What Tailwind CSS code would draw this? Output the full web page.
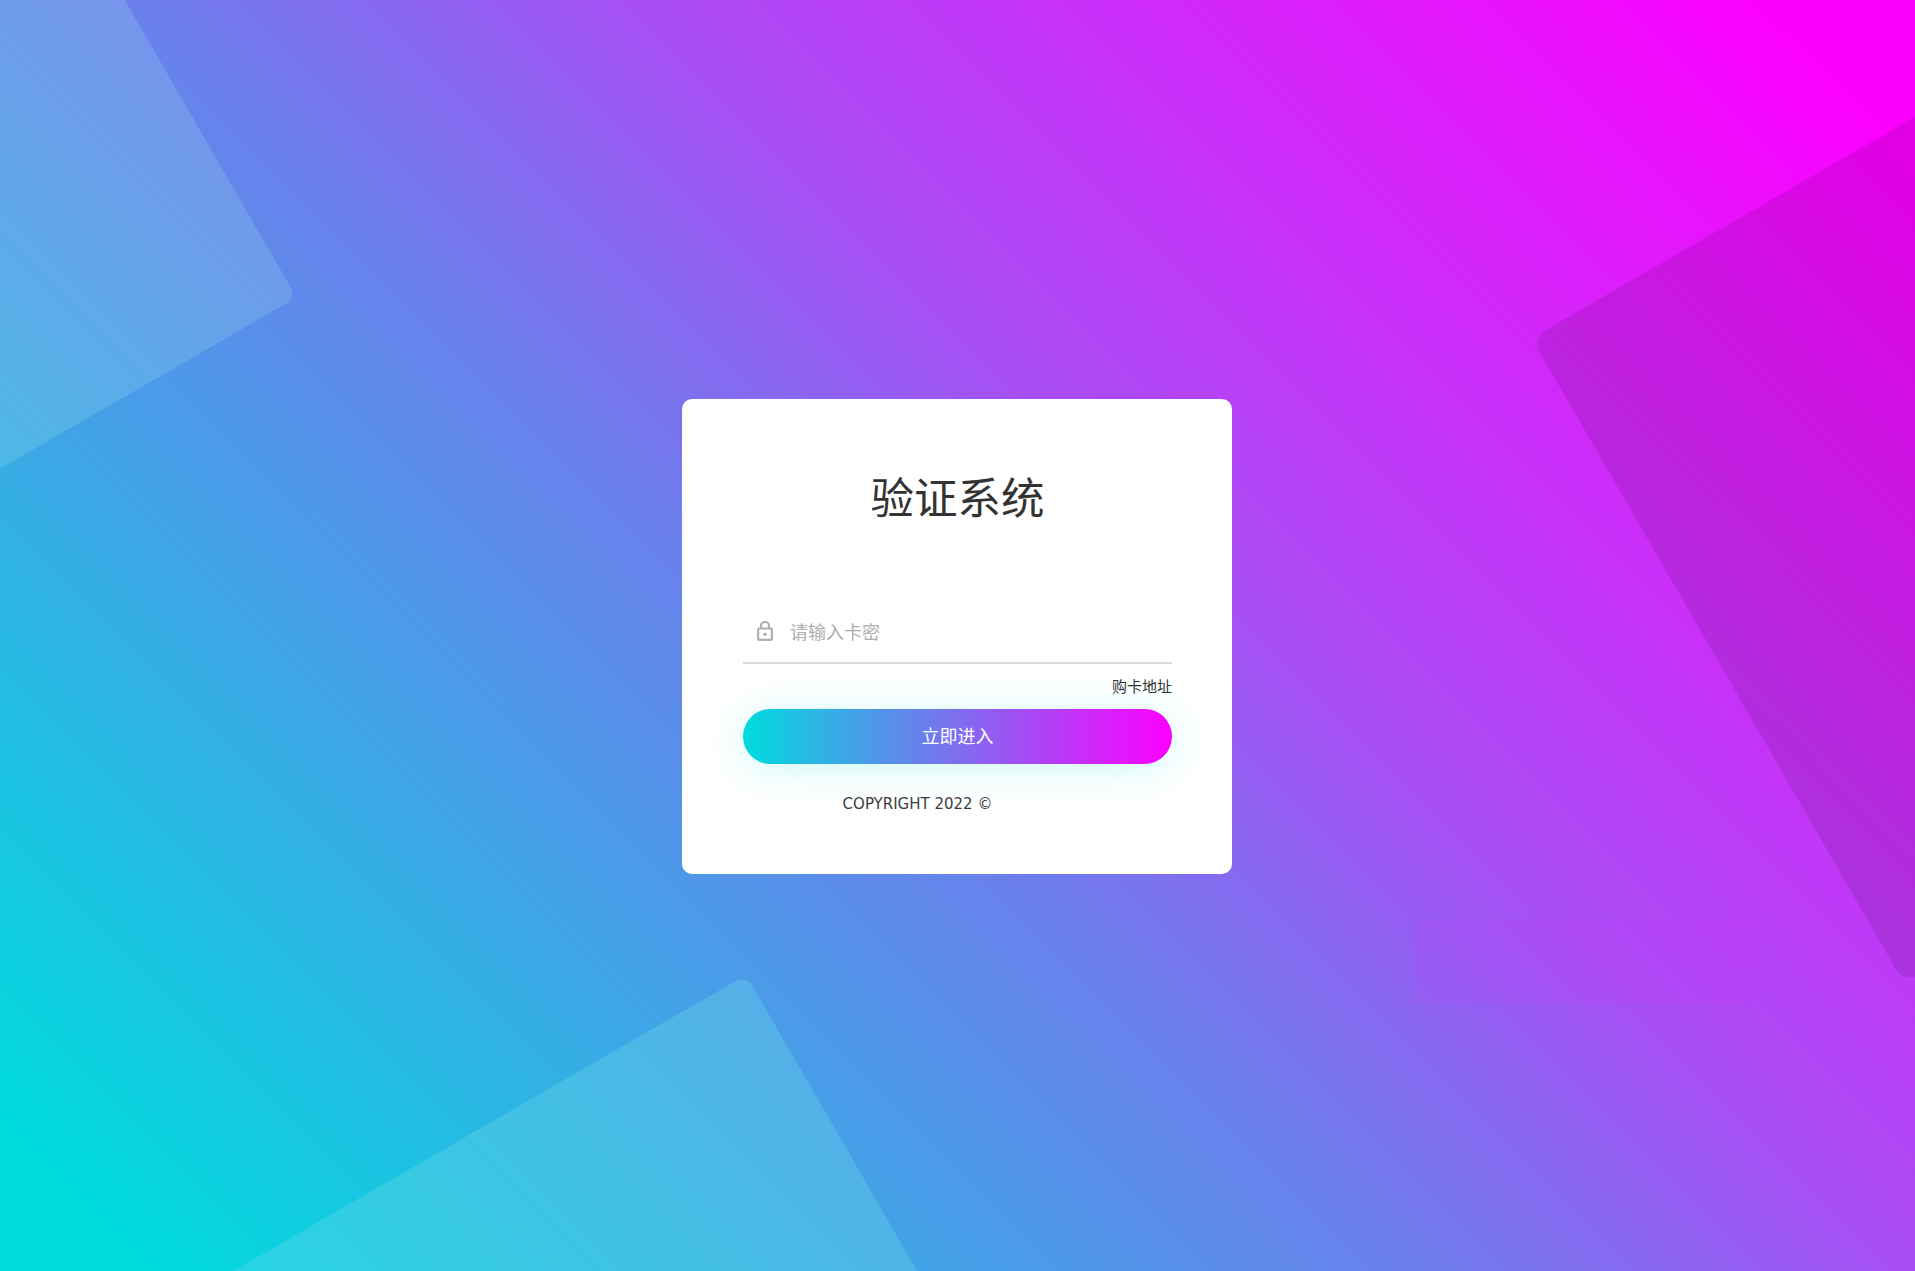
<!DOCTYPE html>
<html lang="zh">
<head>
<meta charset="utf-8">
<title>验证系统</title>
<script src="https://cdn.jsdelivr.net/npm/@tailwindcss/browser@4"></script>
</head>
<body class="font-['DejaVu_Sans','Noto_Sans_CJK_SC',sans-serif]">
<div class="relative flex min-h-[1271px] items-start justify-center overflow-hidden bg-[linear-gradient(45deg,#00dbde_5%,#6a80ec_44%,#a84ef4_60%,#fc00ff_95%)] pt-[399px]">
  <div class="absolute left-[-295.5px] top-[-44.5px] h-[500px] w-[500px] rotate-[-30deg] rounded-[12px] bg-[rgba(190,250,240,0.17)]"></div>
  <div class="absolute left-[268px] top-[1103px] h-[700px] w-[700px] rotate-[-30deg] rounded-[12px] bg-[rgba(106,215,232,0.345)]"></div>
  <div class="absolute left-[1667.5px] top-[102px] h-[745px] w-[745px] rotate-[-30deg] rounded-[16px] bg-black/10"></div>
  <div class="absolute left-[1413px] top-[919px] h-[84px] w-[342px] bg-[#fc00ff]/5"></div>

  <div class="relative mr-[1px] flex w-[550px] flex-col rounded-[10px] bg-white pb-[60px] pl-[61px] pr-[60px] pt-[72px] text-[#333]">
    <h1 class="h-[56px] text-center text-[43.5px] font-normal leading-[56px]">验证系统</h1>
    <div class="mt-[75px] flex h-[62px] items-center border-b-2 border-[#d9d9d9] pl-[14px]">
      <svg class="mb-[3px] h-[20px] w-[16px] shrink-0 text-[#b0b0b0]" viewBox="0 0 16 20" fill="none" stroke="currentColor" stroke-width="2.2">
        <rect x="1.1" y="7.5" width="13.8" height="11.4" rx="1"/>
        <path d="M4 7.5V4.5a4 3.5 0 0 1 8 0v3"/>
        <circle cx="8" cy="13.2" r="1.8" fill="currentColor" stroke="none"/>
      </svg>
      <input class="ml-[17px] min-w-0 flex-1 bg-transparent text-[18px] text-[#333] outline-none placeholder:text-[#adadad]" type="text" placeholder="请输入卡密">
    </div>
    <div class="mt-[13px] flex justify-end">
      <a class="text-[15px] leading-[20px] text-[#333]" href="#">购卡地址</a>
    </div>
    <button class="mt-[12px] h-[55px] w-full rounded-full bg-[linear-gradient(to_right,#00dbde,#fc00ff)] text-[18px] text-white shadow-[0_5px_40px_rgba(0,219,222,0.2)]" type="button">立即进入</button>
    <p class="mt-[30px] pr-[80px] text-center text-[15px] leading-[20px] text-[#3c3c3c]">COPYRIGHT 2022 ©</p>
  </div>
</div>
</body>
</html>
